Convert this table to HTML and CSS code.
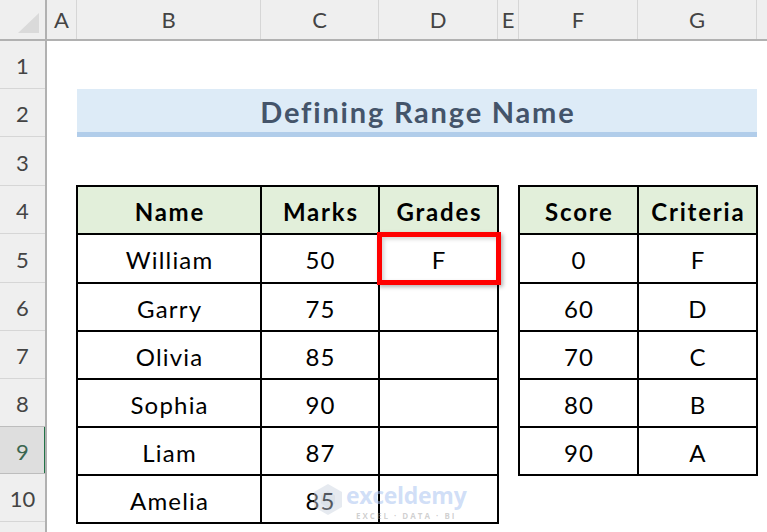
FILE: index.html
```html
<!DOCTYPE html>
<html lang="en">
<head>
<meta charset="utf-8">
<title>Defining Range Name</title>
<link rel="stylesheet" href="styles.css">
</head>
<body>
<div class="app">
  <div class="colbar">
    <div class="corner"><svg width="22" height="21" viewBox="0 0 22 21"><polygon points="21,0 21,20 0,20" fill="#dadada"/></svg></div>
    <div class="ch w-a">A</div>
    <div class="ch w-b">B</div>
    <div class="ch w-c">C</div>
    <div class="ch w-d">D</div>
    <div class="ch w-e">E</div>
    <div class="ch w-f">F</div>
    <div class="ch w-g">G</div>
    <div class="ch w-rest"></div>
  </div>
  <div class="body">
    <div class="rowbar">
      <div class="rh h48">1</div>
      <div class="rh h48">2</div>
      <div class="rh h49">3</div>
      <div class="rh h48">4</div>
      <div class="rh h49">5</div>
      <div class="rh h48">6</div>
      <div class="rh h48">7</div>
      <div class="rh h48">8</div>
      <div class="rh h48 sel">9</div>
      <div class="rh h48">10</div>
      <div class="rh h48"></div>
    </div>
    <div class="sheet">
      <div class="title">Defining Range Name</div>

      <div class="tbl tbl-main">
        <div class="c hd">Name</div><div class="c hd">Marks</div><div class="c hd">Grades</div>
        <div class="c">William</div><div class="c">50</div><div class="c target">F<span class="redbox"></span></div>
        <div class="c">Garry</div><div class="c">75</div><div class="c"></div>
        <div class="c">Olivia</div><div class="c">85</div><div class="c"></div>
        <div class="c">Sophia</div><div class="c">90</div><div class="c"></div>
        <div class="c">Liam</div><div class="c">87</div><div class="c"></div>
        <div class="c">Amelia</div><div class="c">85</div><div class="c"></div>
      </div>

      <div class="tbl tbl-score">
        <div class="c hd">Score</div><div class="c hd">Criteria</div>
        <div class="c">0</div><div class="c">F</div>
        <div class="c">60</div><div class="c">D</div>
        <div class="c">70</div><div class="c">C</div>
        <div class="c">80</div><div class="c">B</div>
        <div class="c">90</div><div class="c">A</div>
      </div>

      <div class="watermark">
        <svg class="wm-logo" width="30" height="33" viewBox="0 0 30 33">
          <polygon points="15,1 29,9 29,24 15,32 1,24 1,9" fill="#c9d2df"/>
          <polygon points="15,8 22,12.5 22,20.5 15,25 8,20.5 8,12.5" fill="#b3bfd0"/>
        </svg>
        <div class="wm-text">
          <div class="wm-name">exceldemy</div>
          <div class="wm-sub">EXCEL · DATA · BI</div>
        </div>
      </div>
    </div>
  </div>
</div>
</body>
</html>
```

FILE: styles.css
```css
* { box-sizing: border-box; }
html, body { margin: 0; padding: 0; background: #fff; }
body { width: 767px; height: 532px; overflow: hidden; font-family: Lato, "Open Sans", sans-serif; }

.app { display: flex; flex-direction: column; width: 767px; height: 532px; overflow: hidden; }

.colbar { display: flex; height: 41px; background: #efefef; border-bottom: 2px solid #b1b1b1; flex: none; }
.corner { width: 47px; border-right: 2px solid #b1b1b1; display: flex; align-items: flex-end; justify-content: flex-end; padding: 0 5px 5px 0; }
.ch { display: flex; align-items: center; justify-content: center; border-right: 1px solid #d6d6d6; color: #444; font-size: 22px; }
.w-a { width: 30px; }
.w-b { width: 184px; }
.w-c { width: 118px; }
.w-d { width: 119px; }
.w-e { width: 21px; }
.w-f { width: 119px; }
.w-g { width: 119px; }
.w-rest { flex: 1; border-right: none; }

.body { display: flex; flex: 1; min-height: 0; overflow: hidden; }
.rowbar { width: 47px; flex: none; display: flex; flex-direction: column; background: #efefef; border-right: 2px solid #b1b1b1; overflow: hidden; }
.rh { display: flex; align-items: center; justify-content: center; border-bottom: 1px solid #d6d6d6; color: #444; font-size: 22px; padding-top: 2px; }
.h48 { height: 48px; flex: none; }
.h49 { height: 49px; flex: none; }
.rh.sel { background: #dedede; color: #3b6650; border-bottom-color: #bdbdbd; border-top: 1px solid #bdbdbd; margin-top: -1px; box-shadow: inset -3px 0 0 #217346; margin-right: -2px; padding-right: 2px; }

.sheet { position: relative; flex: 1; display: grid; overflow: hidden;
  grid-template-columns: 30px 184px 118px 119px 21px 119px 119px 1fr;
  grid-template-rows: 48px 48px 49px 48px 49px 48px 48px 48px 48px 48px 1fr; }

.title { grid-column: 2 / 8; grid-row: 2; background: #ddebf7; border-bottom: 5px solid #b1cdea;
  display: flex; align-items: center; justify-content: center; color: #44546a; font-weight: 700; font-size: 29px;
  letter-spacing: 1.8px; padding-left: 1.8px; padding-top: 2px; }

.tbl { display: grid; }
.tbl-main { grid-column: 2 / 5; grid-row: 4 / 11; grid-template-columns: 184px 118px 119px; grid-template-rows: 48px 49px 48px 48px 48px 48px 48px; }
.tbl-score { grid-column: 6 / 8; grid-row: 4 / 10; grid-template-columns: 119px 119px; grid-template-rows: 48px 49px 48px 48px 48px 48px; }

.c { position: relative; display: flex; align-items: center; justify-content: center; font-size: 24px; color: #000; background: #fff;
  box-shadow: 0 0 0 1px #000, inset 0 0 0 1px #000; padding-top: 2px; letter-spacing: 1.2px; padding-left: 1.2px; }
.c.hd { background: #e2efda; font-weight: 700; letter-spacing: 1.8px; padding-left: 1.8px; }

.redbox { position: absolute; top: -2px; left: -2px; right: -3px; bottom: -2px; border: 5px solid #ff0000; z-index: 2;
  box-shadow: 2px 2px 4px rgba(0,0,0,0.3), inset 2px 2px 4px rgba(0,0,0,0.18); }

.watermark { position: absolute; left: 266px; top: 438px; display: flex; align-items: center; gap: 3px; z-index: 3; pointer-events: none; }
.wm-logo { flex: none; opacity: 0.45; }
.wm-text { display: flex; flex-direction: column; align-items: center; }
.wm-name { font-family: "Open Sans", sans-serif; font-weight: 700; font-size: 23px; color: rgba(170, 195, 240, 0.55); letter-spacing: -0.3px; }
.wm-sub { font-family: "Open Sans", sans-serif; font-weight: 700; font-size: 8px; letter-spacing: 2px; color: rgba(150, 150, 150, 0.45); line-height: 9px; }
```
